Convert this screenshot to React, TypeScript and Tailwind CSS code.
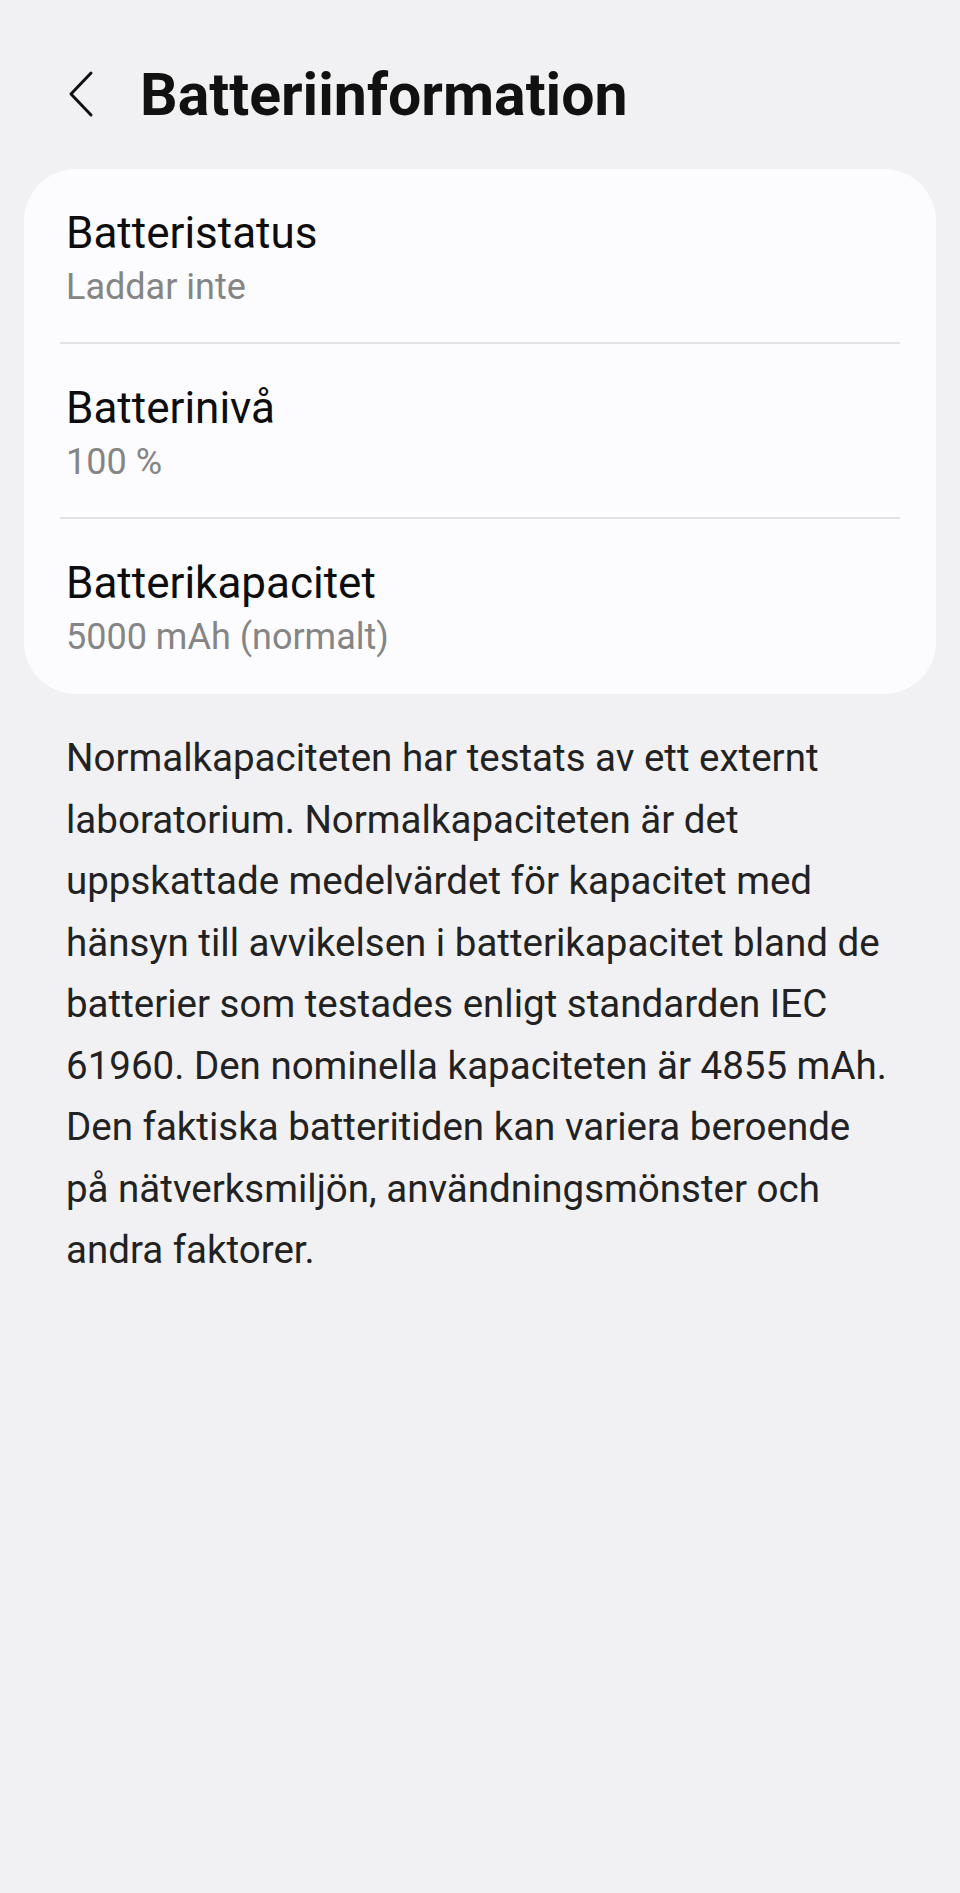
const rows = [
  { title: 'Batteristatus', value: 'Laddar inte' },
  { title: 'Batterinivå', value: '100 %' },
  { title: 'Batterikapacitet', value: '5000 mAh (normalt)' },
];

const lines = [
  'Normalkapaciteten har testats av ett externt',
  'laboratorium. Normalkapaciteten är det',
  'uppskattade medelvärdet för kapacitet med',
  'hänsyn till avvikelsen i batterikapacitet bland de',
  'batterier som testades enligt standarden IEC',
  '61960. Den nominella kapaciteten är 4855 mAh.',
  'Den faktiska batteritiden kan variera beroende',
  'på nätverksmiljön, användningsmönster och',
  'andra faktorer.',
];

export default function App() {
  return (
    <div className="min-h-[1893px] w-[960px] bg-[#f1f1f3] font-['Roboto',sans-serif] text-[#111]">
      {/* header */}
      <header className="flex items-center h-[169px] pt-[19px] pl-[66px]">
        <svg width="30" height="48" viewBox="0 0 30 48" className="mr-[44px]">
          <path d="M25 3 L5 24 L25 45" fill="none" stroke="#111" strokeWidth="3" strokeLinecap="round" strokeLinejoin="round" />
        </svg>
        <h1 className="text-[59px] leading-none font-bold">Batteriinformation</h1>
      </header>

      <div className="mx-[24px] rounded-[52px] bg-[#fcfcfe]">
        {rows.map((r, i) => (
          <div key={r.title}>
            {i > 0 && <div className="mx-[36px] h-[2px] bg-[#e2e2e4]" />}
            <div className={`px-[42px] pt-[38px] ${i === rows.length - 1 ? 'pb-[35px]' : 'pb-[33px]'}`}>
              <div className="text-[44px] leading-[52px] text-[#0d0d0d]">{r.title}</div>
              <div className="mt-[6px] text-[36px] leading-[44px] text-[#858585]">{r.value}</div>
            </div>
          </div>
        ))}
      </div>

      <p className="mt-[33px] px-[66px] text-[38.5px] leading-[61.5px] text-[#222]">
        {lines.map((l, i) => (
          <span key={i} className="block whitespace-nowrap">{l}</span>
        ))}
      </p>
    </div>
  );
}
